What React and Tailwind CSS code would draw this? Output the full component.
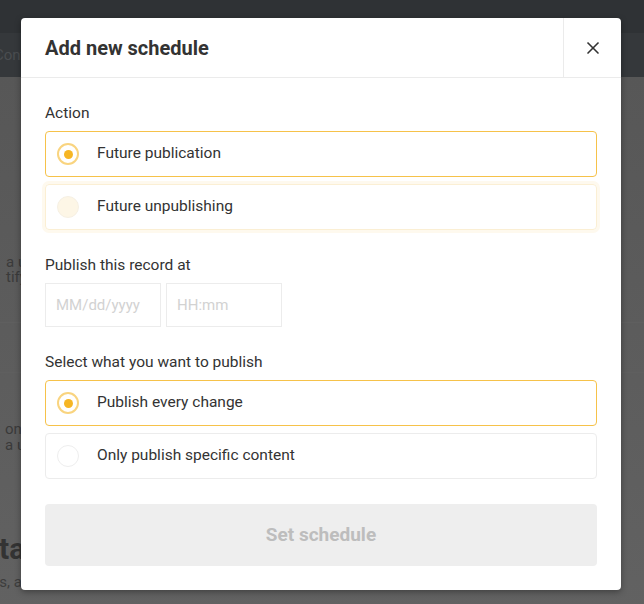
import { X } from 'lucide-react';

const font = { fontFamily: 'Roboto, "Liberation Sans", sans-serif' };

function Radio({ checked, focus }) {
  if (checked) {
    return (
      <span className="w-[22px] h-[22px] rounded-full border-2 border-[#f9d47f] flex items-center justify-center shrink-0">
        <span className="w-[9px] h-[9px] rounded-full bg-[#f6b624]" />
      </span>
    );
  }
  return (
    <span
      className={`w-[22px] h-[22px] rounded-full border shrink-0 ${
        focus ? 'bg-[#fdf6e6] border-[#f6f0e4]' : 'bg-white border-[#eeeeee]'
      }`}
    />
  );
}

function Option({ label, checked, focus }) {
  return (
    <div
      className={`h-[46px] rounded flex items-center pl-[11px] border ${
        checked
          ? 'border-[#f6c24a]'
          : focus
          ? 'border-[#fbefd4] ring-[3px] ring-[#fef9ee]'
          : 'border-[#ececec]'
      }`}
    >
      <Radio checked={checked} focus={focus} />
      <span className="ml-[18px] text-[15.5px] text-[#333]">{label}</span>
    </div>
  );
}

function Label({ children }) {
  return <div className="text-[15.5px] leading-5 text-[#333] mb-2">{children}</div>;
}

export default function App() {
  return (
    <div className="w-[644px] h-[604px] relative overflow-hidden bg-[#5b5b5b]" style={font}>
      {/* page behind the overlay, only its left strip shows */}
      <div className="h-[33px] bg-[#2f3235]" />
      <div className="h-[44px] bg-[#35383b] flex items-center text-[15px] text-[#4a4d50]">
        <div className="w-[21px] overflow-hidden whitespace-nowrap">
          <span className="-ml-[6px] block">Confi</span>
        </div>
      </div>
      <div className="flex flex-col text-[#3a3a3a] text-[15px] bg-gradient-to-b from-[#575757] to-[#636363] h-full">
        <div className="h-[178px]" />
        <div className="w-[21px] overflow-hidden whitespace-nowrap pl-[6px] leading-[15px]">
          <div>a u</div>
          <div>tify</div>
        </div>
        <div className="h-[38px] border-b border-[#5f5f5f]" />
        <div className="h-[50px] border-b border-[#5f5f5f]" />
        <div className="w-[21px] overflow-hidden whitespace-nowrap pl-[5px] pt-[48px] leading-[16px]">
          <div>on</div>
          <div>a u</div>
        </div>
        <div className="h-[30px] border-b border-[#5f5f5f]" />
        <div className="w-[21px] overflow-hidden whitespace-nowrap pt-[50px] text-[30px] font-bold text-[#333] leading-8">
          <span className="block -ml-[1px]">ta</span>
        </div>
        <div className="w-[21px] overflow-hidden whitespace-nowrap text-[15px] text-[#3d3d3d] mt-[6px]">
          <span className="block -ml-[9px]">ns, a</span>
        </div>
      </div>

      {/* dialog */}
      <div className="absolute left-[21px] top-[18px] w-[600px] bg-white rounded shadow-[0_2px_6px_rgba(0,0,0,0.35)]">
        <div className="flex h-[60px] border-b border-[#ebebeb]">
          <div className="flex-1 flex items-center pl-6 text-[20px] font-bold text-[#333]">
            Add new schedule
          </div>
          <div className="w-[58px] border-l border-[#ebebeb] flex items-center justify-center">
            <X size={20} strokeWidth={2} color="#333" />
          </div>
        </div>

        <div className="px-6 pt-[25px] pb-6">
          <Label>Action</Label>
          <div className="flex flex-col gap-[7px]">
            <Option label="Future publication" checked />
            <Option label="Future unpublishing" focus />
          </div>

          <div className="mt-[25px]">
            <Label>Publish this record at</Label>
            <div className="flex gap-[5px]">
              <div className="w-[116px] h-[44px] border border-[#ececec] flex items-center px-[10px] text-[15px] text-[#d2d2d2]">
                MM/dd/yyyy
              </div>
              <div className="w-[116px] h-[44px] border border-[#ececec] flex items-center px-[10px] text-[15px] text-[#d2d2d2]">
                HH:mm
              </div>
            </div>
          </div>

          <div className="mt-[25px]">
            <Label>Select what you want to publish</Label>
            <div className="flex flex-col gap-[7px]">
              <Option label="Publish every change" checked />
              <Option label="Only publish specific content" />
            </div>
          </div>

          <button className="mt-[25px] w-full h-[62px] rounded bg-[#eeeeee] text-[19px] font-bold text-[#bdbdbd]">
            Set schedule
          </button>
        </div>
      </div>
    </div>
  );
}
